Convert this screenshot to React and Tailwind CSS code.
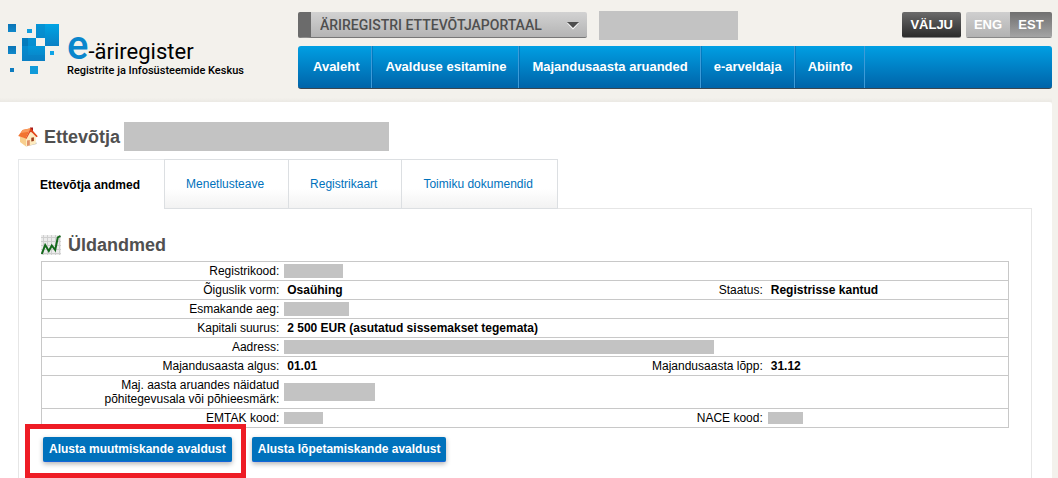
import React from "react";

const NAV = ["Avaleht", "Avalduse esitamine", "Majandusaasta aruanded", "e-arveldaja", "Abiinfo"];
const TABS = ["Ettevõtja andmed", "Menetlusteave", "Registrikaart", "Toimiku dokumendid"];

function Mosaic() {
  return (
    <svg className="h-[50px] w-[51px] shrink-0" viewBox="8 24 51 50" aria-hidden="true">
      <defs>
        <linearGradient id="sq" x1="0" y1="0" x2="0" y2="1">
          <stop offset="0" stopColor="#00a4e4" />
          <stop offset="1" stopColor="#0a80c4" />
        </linearGradient>
        <linearGradient id="dk" x1="0" y1="0" x2="0" y2="1">
          <stop offset="0" stopColor="#0a74b6" />
          <stop offset="1" stopColor="#1088ca" />
        </linearGradient>
      </defs>
      <rect x="8" y="24" width="8" height="8" fill="url(#dk)" />
      <rect x="8" y="46" width="8" height="8" fill="url(#dk)" />
      <rect x="27" y="29" width="5" height="4" fill="#109fe0" />
      <rect x="36" y="24" width="23" height="22" fill="url(#sq)" />
      <rect x="36" y="24" width="9" height="14" fill="#0a86c8" opacity=".55" />
      <rect x="22" y="38" width="23" height="23" fill="url(#sq)" />
      <rect x="22" y="38" width="6" height="8" fill="#0673b4" opacity=".8" />
      <rect x="28" y="38" width="8" height="8" fill="#0a86c8" opacity=".6" />
      <rect x="22" y="46" width="6" height="15" fill="#0a80c4" opacity=".5" />
      <rect x="28" y="55" width="17" height="6" fill="#0a7cc0" opacity=".4" />
      <rect x="36" y="38" width="9" height="8" fill="#f3f1ec" />
      <rect x="50" y="51" width="4" height="4" fill="#0fa4e6" />
      <rect x="10" y="68" width="4" height="4" fill="#0d7cbf" />
      <rect x="30" y="66" width="8" height="8" fill="#109ad9" />
    </svg>
  );
}

function House() {
  return (
    <svg className="size-5 shrink-0" viewBox="0 0 20 20" aria-hidden="true">
      <path d="M8 19.500L18.500 17v-1.500L9 17z" fill="#8e8880" opacity=".6" />
      <path d="M12 .5h3v5h-3z" fill="#a81a1a" />
      <path d="M2 9.500L8 11v8.500L2 15z" fill="#f8cf8e" />
      <path d="M8 11.500L12.800 4.500l5 5v7.300L8 19.500z" fill="#fdebc0" />
      <path d="M4.500 3L12.600 1.300 7.700 11.600 .2 9z" fill="#f2742f" />
      <path d="M4.500 3l8.100-1.700-1.700 3.500L2.800 6z" fill="#f99a5c" />
      <path d="M12.600 1.300l7.200 8-1.300.9-5.800-5.900-4.300 7.600-.7-.3z" fill="#e2481a" />
      <path d="M9 13.500l2.800-.6v5.300l-2.800.7z" fill="#e0926a" />
      <path d="M13.300 10.800l2.600-.5v3.700l-2.600.5z" fill="#9c3f1d" />
    </svg>
  );
}

function Chart() {
  return (
    <svg className="size-5 shrink-0" viewBox="0 0 20 20" aria-hidden="true">
      <rect width="20" height="20" fill="#ececec" />
      <path d="M2.500 0v20M6.500 0v20M10.500 0v20M14.500 0v20M18.500 0v20M0 2.500h20M0 6.500h20M0 10.500h20M0 14.500h20M0 18.500h20" stroke="#cfcfcf" />
      <path d="M.8 19L4.200 10l3.600 6 3-5.500 3.400 4.500L16.800 2.500l2.700-1.500" fill="none" stroke="#14691c" strokeWidth="2" />
    </svg>
  );
}

function Label({ children }) {
  return <th scope="row" className="py-0.5 pr-1 text-right font-normal">{children}</th>;
}

function Value({ children, span }) {
  return <td colSpan={span} className="py-0.5 pl-1 font-bold">{children}</td>;
}

function Redacted({ bar, span }) {
  return (
    <td colSpan={span} className="pl-px">
      <div className={"bg-[#c3c3c3] " + bar} />
    </td>
  );
}

function ActionButton({ children }) {
  return (
    <button type="button" className="h-[25px] rounded-xs border-b border-[#1565d8] bg-[#0072bc] px-1.5 text-xs leading-6 font-bold whitespace-nowrap text-white shadow-[0_2px_5px_rgba(0,0,0,0.3)]">
      {children}
    </button>
  );
}

export default function App() {
  return (
    <div className="min-h-screen bg-[#f3f1ec] pr-1.5 font-['Liberation_Sans',Arial,sans-serif] text-xs text-black">
      <header className="flex h-[102px] bg-[linear-gradient(#f3f1ec_96%,#ebe9e4)]">
        <a href="#" className="flex w-[298px] shrink-0 gap-2 pt-6 pl-2 font-['Roboto',sans-serif]">
          <Mosaic />
          <span className="flex flex-col pt-1.5">
            <span className="flex h-[35px] items-baseline leading-8">
              <span className="text-[40px] font-medium text-[#0a86cc]">e</span>
              <span className="text-[22px]">-äriregister</span>
            </span>
            <span className="text-[11px] leading-3 font-medium">Registrite ja Infosüsteemide Keskus</span>
          </span>
        </a>
        <div className="flex min-w-0 flex-1 flex-col">
          <div className="flex h-[46px] items-start pt-3">
            <div className="relative w-[289px] shrink-0">
              <select aria-label="Portaal" className="block h-[26px] w-full appearance-none rounded-xs border-b border-l-[13px] border-b-[#777] border-l-[#6b6b6b] bg-linear-to-b from-[#d2d2d2] to-[#b4b4b4] pl-[9px] font-['Roboto',sans-serif] text-sm font-medium text-[#4f4f4f]">
                <option>ÄRIREGISTRI ETTEVÕTJAPORTAAL</option>
              </select>
              <svg className="pointer-events-none absolute top-2.5 right-2 h-2 w-3" viewBox="0 0 12 8" aria-hidden="true">
                <path d="M0 1l6 6.500L12 1z" fill="#fff" />
                <path d="M0 0h12L6 6z" fill="#4d4d4d" />
              </svg>
            </div>
            <div className="-mt-px ml-3 h-[29px] w-[139px] bg-[#c3c3c3]" />
            <div className="ml-auto flex gap-[5px] text-[13px] font-bold text-white">
              <button type="button" className="h-[26px] rounded-xs border-b border-[#888] bg-linear-to-b from-[#6b6b6b] to-[#2c2c2c] px-2">VÄLJU</button>
              <div className="flex overflow-hidden rounded-xs border-b border-[#888]">
                <button type="button" className="h-[25px] w-11 bg-linear-to-b from-[#cfcfcf] to-[#b2b2b2]">ENG</button>
                <button type="button" className="h-[25px] w-[42px] bg-linear-to-b from-[#707070] to-[#a4a4a4]">EST</button>
              </div>
            </div>
          </div>
          <nav className="flex h-[43px] rounded-[3px] border-b border-[#3c4650] bg-linear-to-b from-[#009fe3] to-[#0064a9] pl-0.5 text-[13px] font-bold text-white">
            {NAV.map((n) => (
              <a key={n} href="#" className="flex items-center border-r border-[#3d9bd8] pr-3 pl-[13px] whitespace-nowrap shadow-[inset_1px_0_0_rgba(0,80,150,0.35)] first:shadow-none">
                {n}
              </a>
            ))}
          </nav>
        </div>
      </header>

      <main className="min-h-[calc(100vh-102px)] rounded-tr-[3px] bg-white pr-5 pl-[18px]">
        <div className="flex h-[57px] items-center pt-3">
          <House />
          <h1 className="ml-1.5 text-lg font-bold text-[#505050]">Ettevõtja</h1>
          <div className="ml-1 h-[29px] w-[265px] bg-[#c3c3c3]" />
        </div>

        <div className="flex">
          <div role="tablist" className="flex">
            {TABS.map((t, i) => (
              <button
                key={t}
                type="button"
                role="tab"
                aria-selected={i === 0}
                className={
                  "h-[50px] border-t border-l pr-6 pl-[21px] last:border-r " +
                  (i === 0
                    ? "border-[#e6e8ea] bg-white font-bold text-black"
                    : "border-b border-[#dcdfe2] bg-linear-to-b from-white from-60% to-[#f2f2f2] text-[#0072bc]")
                }
              >
                {t}
              </button>
            ))}
          </div>
          <div className="flex-1 border-b border-[#e6e6e6]" />
        </div>

        <section className="min-h-[calc(100vh-209px)] border-x border-[#e6e6e6] px-[22px] pt-[26px] pb-4">
          <div className="flex h-[26px] items-start gap-[7px]">
            <Chart />
            <h2 className="-mt-1 text-lg font-bold text-[#505050]">Üldandmed</h2>
          </div>
          <table className="w-full table-fixed border-collapse border border-[#c8c8c8] leading-[14px] [&_tr]:h-[19px] [&_tr]:border-b [&_tr]:border-[#c8c8c8]">
            <colgroup>
              <col className="w-1/4" />
              <col className="w-1/4" />
              <col className="w-1/4" />
              <col className="w-1/4" />
            </colgroup>
            <tbody>
              <tr><Label>Registrikood:</Label><Redacted span={3} bar="h-3.5 w-[59px]" /></tr>
              <tr><Label>Õiguslik vorm:</Label><Value>Osaühing</Value><Label>Staatus:</Label><Value>Registrisse kantud</Value></tr>
              <tr><Label>Esmakande aeg:</Label><Redacted span={3} bar="h-3.5 w-[65px]" /></tr>
              <tr><Label>Kapitali suurus:</Label><Value span={3}>2 500 EUR (asutatud sissemakset tegemata)</Value></tr>
              <tr><Label>Aadress:</Label><Redacted span={3} bar="h-3.5 w-[430px]" /></tr>
              <tr><Label>Majandusaasta algus:</Label><Value>01.01</Value><Label>Majandusaasta lõpp:</Label><Value>31.12</Value></tr>
              <tr><Label>Maj. aasta aruandes näidatud<br />põhitegevusala või põhieesmärk:</Label><Redacted span={3} bar="h-[18px] w-[91px]" /></tr>
              <tr><Label>EMTAK kood:</Label><Redacted bar="h-3 w-[39px]" /><Label>NACE kood:</Label><Redacted bar="h-3 w-[35px]" /></tr>
            </tbody>
          </table>
          <div className="mt-[9px] ml-0.5 flex gap-5">
            <div className="relative flex">
              <ActionButton>Alusta muutmiskande avaldust</ActionButton>
              <div className="pointer-events-none absolute -top-[13px] -right-3.5 -bottom-4 -left-[18px] border-5 border-[#ee1c25]" />
            </div>
            <ActionButton>Alusta lõpetamiskande avaldust</ActionButton>
          </div>
        </section>
      </main>
    </div>
  );
}
